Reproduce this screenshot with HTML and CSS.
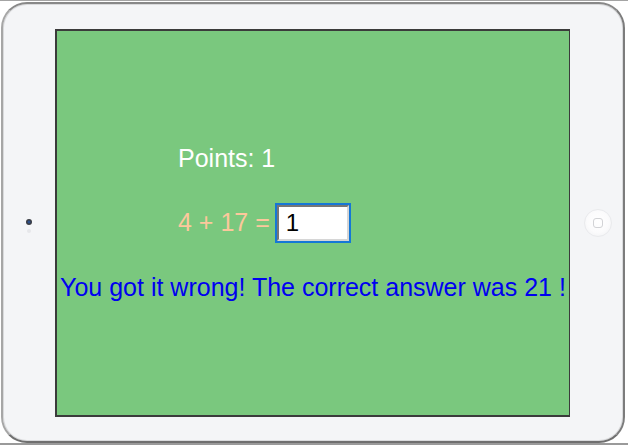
FILE: index.html
```html
<!DOCTYPE html>
<html>
<head>
<meta charset="utf-8">
<link rel="stylesheet" href="styles.css">
</head>
<body>
<div class="page">
  <div class="device">
    <div class="bezel bezel-left">
      <div class="camera"></div>
      <div class="sensor"></div>
    </div>
    <div class="screen">
      <div class="game">
        <div class="points">Points: 1</div>
        <div class="question">
          <span class="equation">4 + 17 =</span>
          <input class="answer" type="text" value="1">
        </div>
      </div>
      <div class="feedback">You got it wrong! The correct answer was 21 !</div>
    </div>
    <div class="bezel bezel-right">
      <div class="home"><div class="home-square"></div></div>
    </div>
  </div>
</div>
</body>
</html>
```

FILE: styles.css
```css
html, body {
  margin: 0;
  padding: 0;
  background: #ffffff;
}

body {
  width: 628px;
  height: 445px;
  overflow: hidden;
  font-family: "Liberation Sans", Arial, sans-serif;
}

.page {
  box-sizing: border-box;
  width: 628px;
  height: 445px;
  border-top: 1px solid #a4a4a4;
  border-bottom: 2px solid #9a9a9a;
  padding: 1px 3px 0 1px;
}

.device {
  box-sizing: border-box;
  width: 624px;
  height: 441px;
  border: 2px solid #8e8e8e;
  border-top-color: #888888;
  border-bottom-color: #6f6f6f;
  border-left-color: #a6a6a6;
  border-right-color: #7c7c7c;
  border-radius: 26px;
  background: #f4f5f7;
  box-shadow: inset 0 0 0 1px #d9dadc;
  display: flex;
  align-items: center;
}

.bezel {
  align-self: stretch;
  display: flex;
  flex-direction: column;
  align-items: center;
  justify-content: center;
}

.bezel-left {
  width: 52px;
}

.bezel-right {
  flex: 1;
  padding-left: 2px;
}

.camera {
  width: 6px;
  height: 6px;
  border-radius: 50%;
  background: radial-gradient(circle, #2c5aa0 0, #2c4a80 1px, #3a3d44 2px);
  margin-top: 6px;
}

.sensor {
  width: 4px;
  height: 4px;
  border-radius: 50%;
  background: #e6e7ea;
  margin-top: 4px;
}

.home {
  box-sizing: border-box;
  width: 28px;
  height: 28px;
  border-radius: 50%;
  background: radial-gradient(circle at 50% 45%, #ffffff 0, #fbfbfc 55%, #eeeff1 100%);
  border: 1px solid #e9eaed;
  display: flex;
  align-items: center;
  justify-content: center;
}

.home-square {
  box-sizing: border-box;
  width: 10px;
  height: 10px;
  border: 1px solid #d2d3d6;
  border-radius: 3px;
}

.screen {
  box-sizing: border-box;
  width: 515px;
  height: 388px;
  border: 2px solid #3b3b3b;
  border-right-width: 1.5px;
  background: #7ac87e;
  padding-top: 113px;
  display: flex;
  flex-direction: column;
  gap: 30px;
}

.game {
  display: flex;
  flex-direction: column;
  gap: 30px;
  padding-left: 121px;
}

.points {
  color: #ffffff;
  font-size: 25px;
  line-height: 29px;
}

.question {
  display: flex;
  align-items: center;
  gap: 7px;
  height: 40px;
}

.equation {
  color: #fcc89c;
  font-size: 25px;
  line-height: 29px;
}

.answer {
  box-sizing: border-box;
  width: 72px;
  height: 36px;
  margin: 0;
  padding: 0 7px;
  border: 2px solid;
  border-color: #767676 #d6d6d6 #d6d6d6 #767676;
  outline: 2px solid #1577d6;
  background: #ffffff;
  color: #000000;
  font-family: "Liberation Sans", Arial, sans-serif;
  font-size: 24px;
}

.feedback {
  color: #0000f0;
  font-size: 25px;
  line-height: 29px;
  text-align: center;
  white-space: nowrap;
}
```
